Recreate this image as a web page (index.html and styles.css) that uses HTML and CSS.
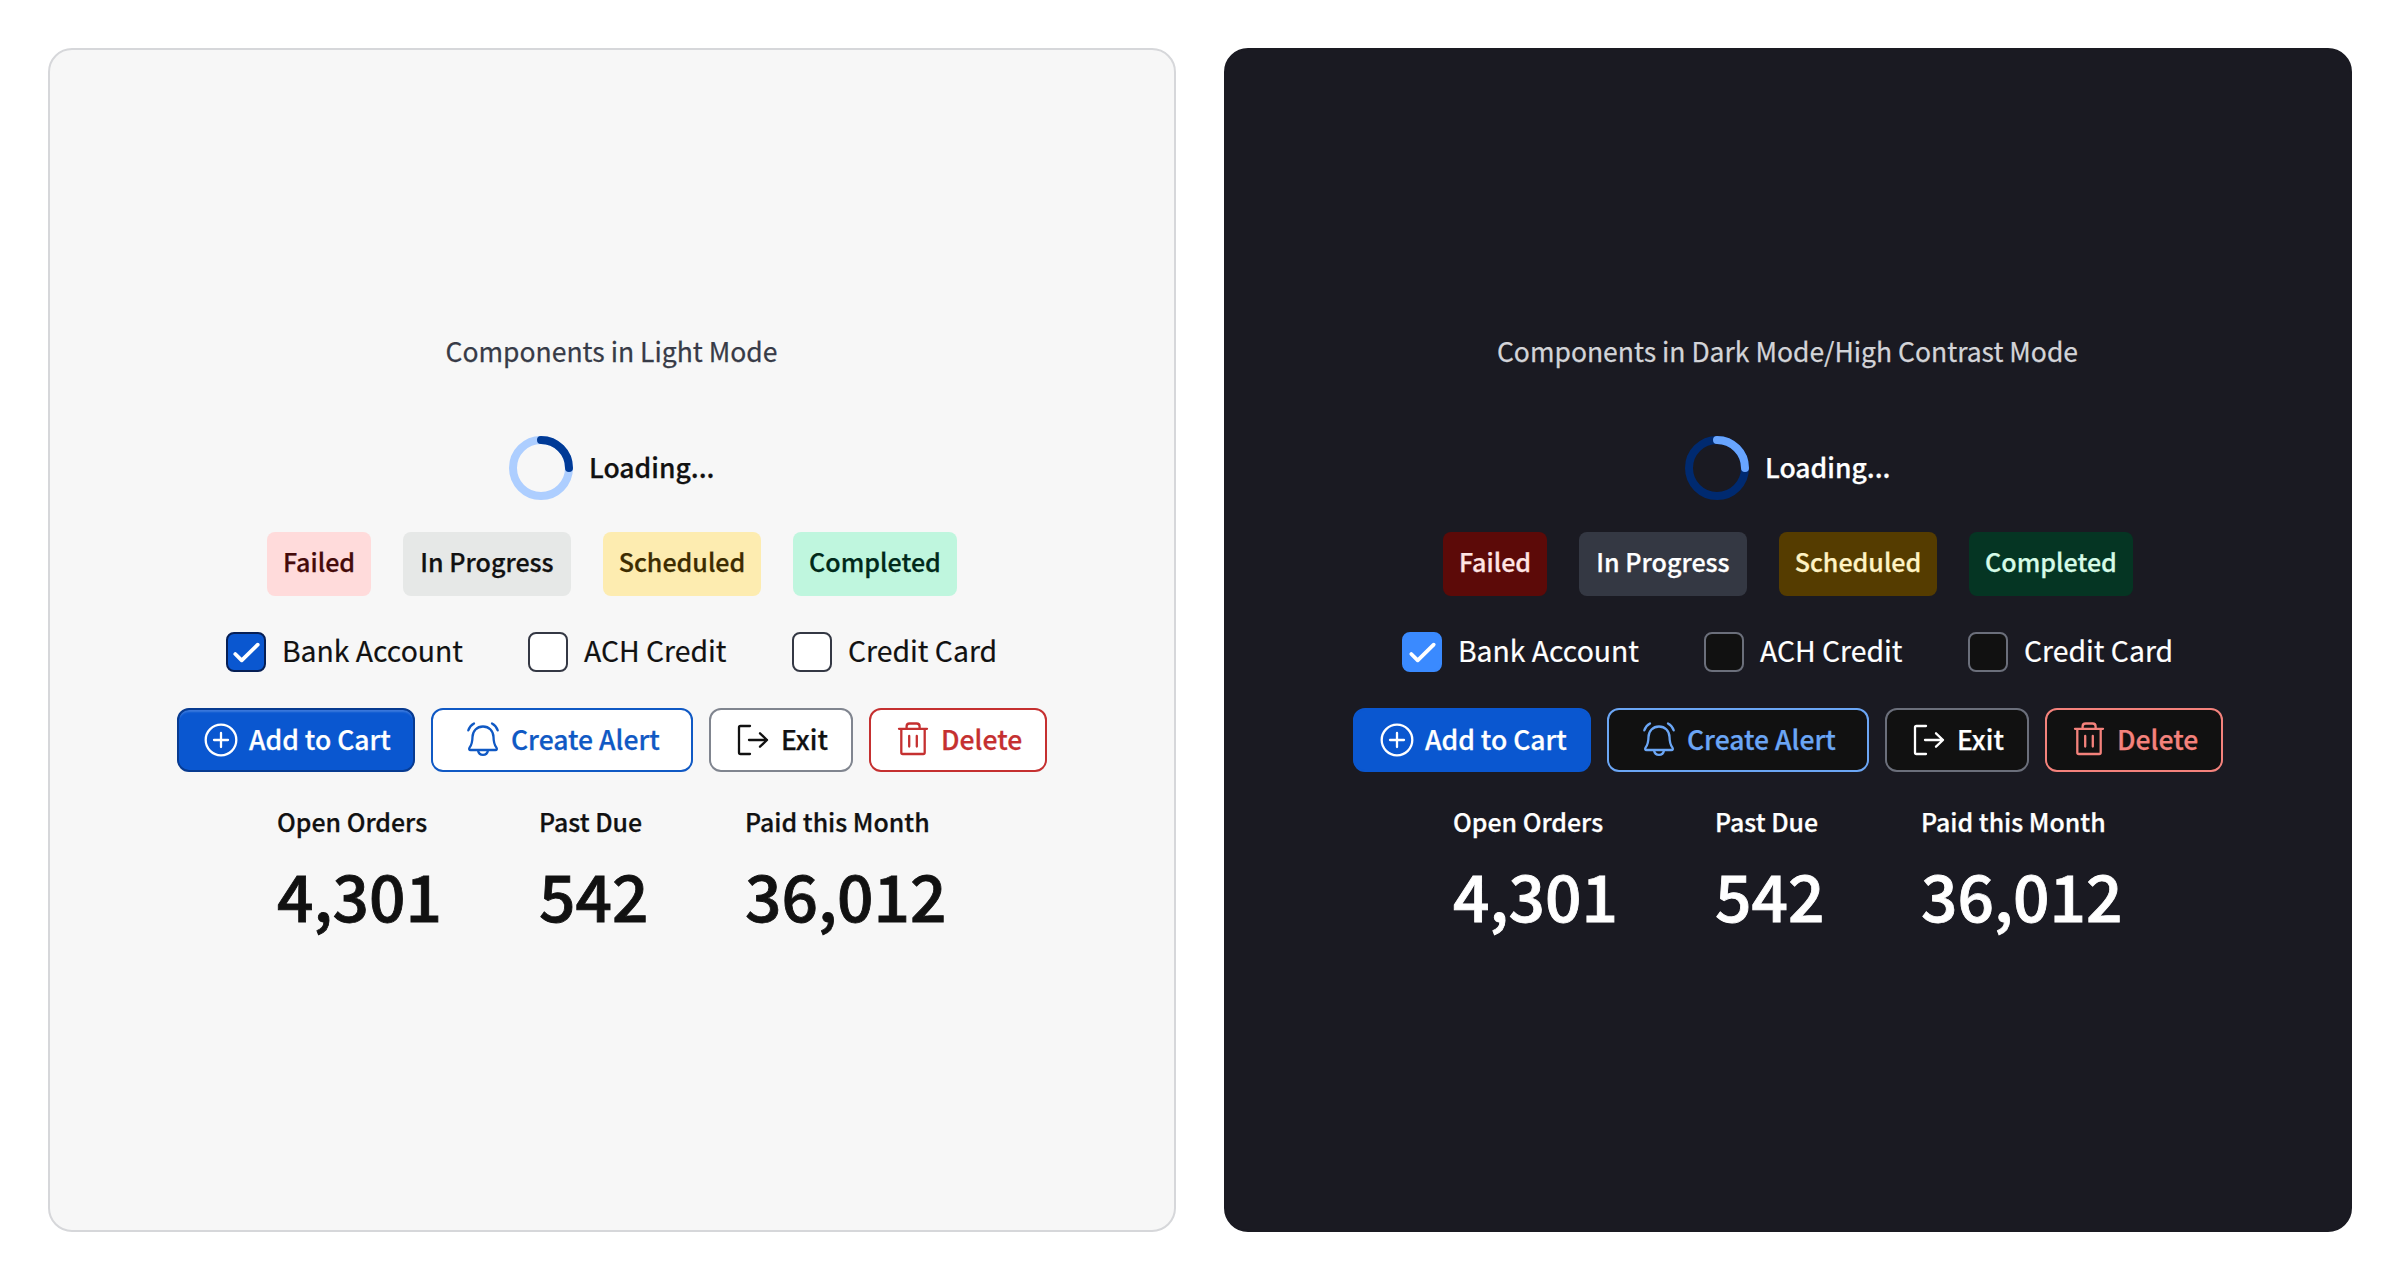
FILE: index.html
```
<!DOCTYPE html>
<html lang="en">
<head>
<meta charset="utf-8">
<title>Components</title>
<link rel="stylesheet" href="styles.css">
</head>
<body>
<svg class="sprite" aria-hidden="true">
  <symbol id="plus" viewBox="0 0 40 40"><circle cx="20" cy="20" r="15.3"/><path d="M20 13v14M13 20h14"/></symbol>
  <symbol id="bell" viewBox="0 0 40 40"><path d="M20 6.500c-6.200 0-10.300 4.500-10.500 10.500-.1 4.800-.4 7.200-2.800 10.400-1 1.500-.6 2.600.9 2.600h24.800c1.500 0 1.900-1.100.9-2.600-2.400-3.200-2.700-5.600-2.800-10.400C30.300 11 26.200 6.500 20 6.500zM15 30.500c.5 2.700 2.400 4.300 5 4.300s4.500-1.600 5-4.300M5.300 10.300c1-2.900 2.900-5.300 5.700-6.800M34.700 10.300c-1-2.900-2.900-5.300-5.700-6.800"/></symbol>
  <symbol id="exit" viewBox="0 0 40 40"><path d="M17 6H7.500Q6 6 6 7.500v25Q6 34 7.500 34H17M16 20h18M27 13.300l7 6.700-7 6.700"/></symbol>
  <symbol id="trash" viewBox="0 0 40 40"><path d="M6 8.800h28M13.600 8.600V6.500q0-3 3-3h7q3 0 3 3v2.100M8.300 9v23.500q0 1.500 1.500 1.500h20.400q1.500 0 1.500-1.500V9M16.200 16v10.500M23.800 16v10.500"/></symbol>
  <symbol id="check" viewBox="0 0 40 40"><path d="M9.300 22l6.400 6.300 16-15.600"/></symbol>
  <symbol id="ring" viewBox="0 0 64 64"><circle class="track" cx="32" cy="32" r="28"/><path class="arc" d="M32 4a28 28 0 0 1 28 28"/></symbol>
</svg>
<main class="board">
  <section class="panel light">
    <h2 class="title">Components in Light Mode</h2>
    <div class="loader"><svg class="spinner"><use href="#ring"/></svg><span>Loading...</span></div>
    <div class="badges">
      <span class="badge failed">Failed</span><span class="badge progress">In Progress</span><span class="badge scheduled">Scheduled</span><span class="badge completed">Completed</span>
    </div>
    <div class="checks">
      <div class="check bank"><span class="box on"><svg class="tick"><use href="#check"/></svg></span><span class="name">Bank Account</span></div>
      <div class="check ach"><span class="box"></span><span class="name">ACH Credit</span></div>
      <div class="check card"><span class="box"></span><span class="name">Credit Card</span></div>
    </div>
    <div class="buttons">
      <button class="btn add"><svg class="icon"><use href="#plus"/></svg><span>Add to Cart</span></button>
      <button class="btn alert"><svg class="icon"><use href="#bell"/></svg><span>Create Alert</span></button>
      <button class="btn leave"><svg class="icon"><use href="#exit"/></svg><span>Exit</span></button>
      <button class="btn delete"><svg class="icon"><use href="#trash"/></svg><span>Delete</span></button>
    </div>
    <div class="stats">
      <div class="stat orders"><span class="label">Open Orders</span><span class="value">4,301</span></div>
      <div class="stat due"><span class="label">Past Due</span><span class="value">542</span></div>
      <div class="stat paid"><span class="label">Paid this Month</span><span class="value">36,012</span></div>
    </div>
  </section>
  <section class="panel dark">
    <h2 class="title">Components in Dark Mode/High Contrast Mode</h2>
    <div class="loader"><svg class="spinner"><use href="#ring"/></svg><span>Loading...</span></div>
    <div class="badges">
      <span class="badge failed">Failed</span><span class="badge progress">In Progress</span><span class="badge scheduled">Scheduled</span><span class="badge completed">Completed</span>
    </div>
    <div class="checks">
      <div class="check bank"><span class="box on"><svg class="tick"><use href="#check"/></svg></span><span class="name">Bank Account</span></div>
      <div class="check ach"><span class="box"></span><span class="name">ACH Credit</span></div>
      <div class="check card"><span class="box"></span><span class="name">Credit Card</span></div>
    </div>
    <div class="buttons">
      <button class="btn add"><svg class="icon"><use href="#plus"/></svg><span>Add to Cart</span></button>
      <button class="btn alert"><svg class="icon"><use href="#bell"/></svg><span>Create Alert</span></button>
      <button class="btn leave"><svg class="icon"><use href="#exit"/></svg><span>Exit</span></button>
      <button class="btn delete"><svg class="icon"><use href="#trash"/></svg><span>Delete</span></button>
    </div>
    <div class="stats">
      <div class="stat orders"><span class="label">Open Orders</span><span class="value">4,301</span></div>
      <div class="stat due"><span class="label">Past Due</span><span class="value">542</span></div>
      <div class="stat paid"><span class="label">Paid this Month</span><span class="value">36,012</span></div>
    </div>
  </section>
</main>
</body>
</html>
```
FILE: styles.css
```
* { box-sizing: border-box; }
body { margin: 0; background: #fff; font-family: "Noto Sans CJK JP", "Noto Sans", sans-serif; font-weight: 500; }
.sprite { display: none; }
.board { display: grid; grid-template-columns: 1fr 1fr; gap: 48px; padding: 48px; height: 1280px; }

.panel { display: flex; flex-direction: column; align-items: center; height: 1184px; padding-top: 281px; border: 2px solid var(--edge); border-radius: 24px; background: var(--bg); color: var(--text); white-space: nowrap; -webkit-text-stroke: 0.25px; }
.light { --bg: #f7f7f7; --edge: #d6d7da; --text: #111; --title: #373b47; --track: #adceff; --arc: #003a96; --surface: #fff; --box-edge: #343844; --on: #0a57d0; --on-edge: #061f55; --blue: #1059c4; --gray: #80858f; --red: #c53030; }
.dark { --bg: #1a1a22; --edge: #1a1a22; --text: #fff; --title: #d3d4d8; --track: #002a70; --arc: #68a5ff; --surface: #111; --box-edge: #6b6f7b; --on: #3a8aff; --on-edge: #3a8aff; --blue: #6ba6f5; --gray: #6b6f7b; --red: #f4827c; }

.title { margin: 0; padding-right: 1px; font-size: 26.500px; font-weight: 400; line-height: 40px; color: var(--title); }

.loader { display: flex; align-items: center; gap: 16px; width: 206px; height: 64px; margin-top: 65px; font-size: 26.500px; line-height: 40px; }
.loader span { padding-bottom: 3px; }
.spinner { flex: none; width: 64px; height: 64px; fill: none; stroke-width: 8; stroke-linecap: round; }
.track { stroke: var(--track); }
.arc { stroke: var(--arc); }

.badges { display: flex; gap: 32px; margin-top: 32px; }
.badge { height: 64px; border-radius: 8px; font-size: 25.050px; line-height: 58px; text-align: center; }
.badge.failed { width: 104px; }
.badge.progress { width: 168px; }
.badge.scheduled { width: 158px; }
.badge.completed { width: 164px; }
.light .failed { background: #ffdbdb; color: #450a0a; }
.light .progress { background: #e6e8e7; color: #111; }
.light .scheduled { background: #fdecb0; color: #3d2c00; }
.light .completed { background: #bff6de; color: #00291a; }
.dark .failed { background: #5c0a08; color: #ffe5e3; }
.dark .progress { background: #343843; color: #fff; }
.dark .scheduled { background: #553c00; color: #fff3c4; }
.dark .completed { background: #053523; color: #d6fbe7; }

.checks { display: flex; gap: 64px; margin-top: 36px; font-size: 28.350px; font-weight: 400; line-height: 40px; -webkit-text-stroke: 0.2px; }
.check { display: flex; gap: 16px; height: 40px; }
.bank { width: 238px; }
.ach { width: 200px; }
.card { width: 206px; }
.name { line-height: 35px; }
.box { flex: none; width: 40px; height: 40px; border: 2px solid var(--box-edge); border-radius: 8px; background: var(--surface); }
.box.on { border-color: var(--on-edge); background: var(--on); }
.tick { display: block; width: 40px; height: 40px; margin: -2px; fill: none; stroke: #fff; stroke-width: 3.800; stroke-linecap: round; stroke-linejoin: round; }

.buttons { display: flex; gap: 16px; margin-top: 36px; }
.btn { display: flex; align-items: center; gap: 8px; height: 64px; margin: 0; padding: 0 0 0 22px; border: 2px solid currentColor; border-radius: 12px; background: var(--surface); font: inherit; font-size: 26.500px; line-height: 40px; }
.btn span { padding-bottom: 3px; }
.icon { flex: none; width: 40px; height: 40px; fill: none; stroke: currentColor; stroke-width: 2.300; stroke-linecap: round; stroke-linejoin: round; }
.add { width: 238px; color: #fff; background: #0a57d0; border-color: #0a57d0; }
.light .add { border-color: #083b91; box-shadow: inset 0 3px 2px -1px #3b79dc; }
.alert { width: 262px; padding-left: 30px; color: var(--blue); }
.leave { width: 144px; color: var(--text); border-color: var(--gray); }
.delete { width: 178px; color: var(--red); }

.stats { display: flex; gap: 96px; width: 670px; margin-top: 30px; }
.stat { display: flex; flex-direction: column; flex: none; }
.orders { width: 166px; }
.due { width: 110px; }
.paid { width: 206px; }
.label { font-size: 24.900px; line-height: 38px; }
.value { margin-top: 8px; font-size: 64px; line-height: 92px; -webkit-text-stroke: 0.850px; }
```
